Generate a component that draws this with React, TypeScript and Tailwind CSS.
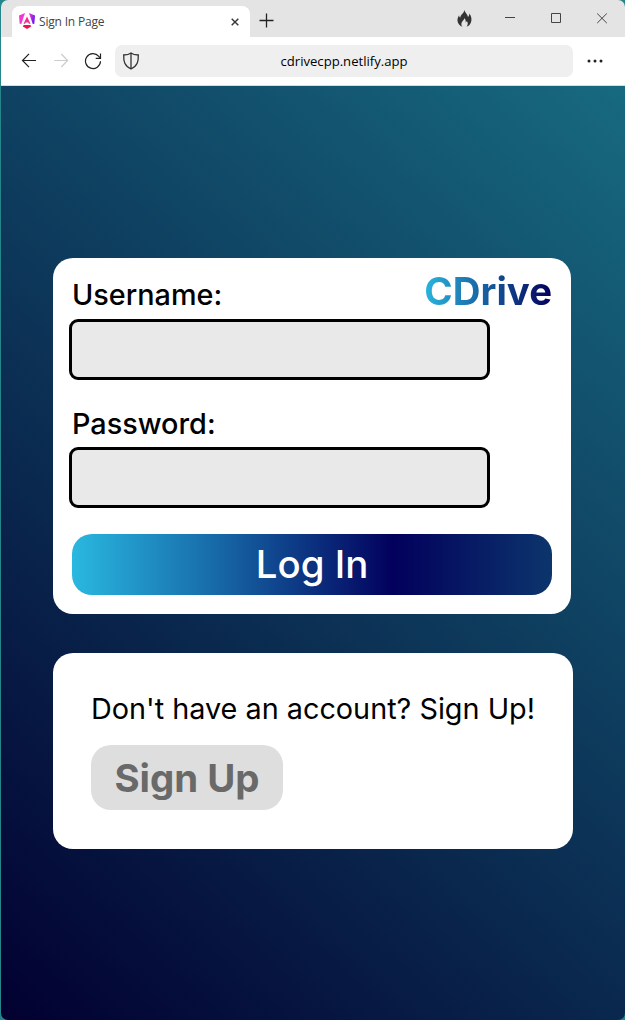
import React from "react";

function AngularLogo() {
  return (
    <svg width="16" height="17" viewBox="0 0 16 17" className="shrink-0">
      <defs>
        <linearGradient id="ng" x1="0" y1="0" x2="1" y2="0.4">
          <stop offset="0" stopColor="#f52fd0" />
          <stop offset="0.55" stopColor="#b02ae6" />
          <stop offset="1" stopColor="#6a14f0" />
        </linearGradient>
      </defs>
      <path d="M0 2.6 L6 0 L2.3 11 L.7 10.7 Z" fill="#f636d2" />
      <path d="M16 2.6 L10 0 L13.7 11 L15.3 10.7 Z" fill="url(#ng)" />
      <path d="M8 3.4 L11.5 10.8 H9.9 L9.3 9.5 H6.7 L6.1 10.8 H4.5 Z" fill="#f02f92" />
      <path d="M4.7 12 H11.3 L12.2 13.6 L8 16 L3.8 13.6 Z" fill="#f0124f" />
    </svg>
  );
}

function TabStrip() {
  return (
    <header className="flex h-[37px] shrink-0 bg-[#e4e4e4] pl-[11px]">
      <div className="mt-1.5 flex h-[31px] w-[238px] items-center rounded-t-[8px] bg-white pl-[7px] pr-[11px]">
        <AngularLogo />
        <span className="ml-1 grow font-['Open_Sans',sans-serif] text-[12px] tracking-[-0.18px] text-[#444]">Sign In Page</span>
        <svg width="8" height="8" viewBox="0 0 8 8" stroke="#333" strokeWidth="1.4"><path d="M.7.7 7.3 7.3M7.3.7.7 7.3" /></svg>
      </div>
      <svg className="ml-[9px] mt-[13px]" width="15" height="15" viewBox="0 0 15 15" stroke="#222" strokeWidth="1.3"><path d="M7.5.5v14M.5 7.5h14" /></svg>
      <div className="ml-auto mr-[17px] flex h-[36px] items-center">
        <svg className="mr-[33px]" width="15" height="17" viewBox="0 0 15 17">
          <path d="M7.4 0C8 3 10.7 4.2 11 7C12 6.2 12.3 5 12.2 3.5C14.5 6 15 9.2 14 12.2C13.2 14.6 11.7 16 9.6 16.7C11 14.8 11.2 12.6 9.8 11C9.4 12 9 12.3 8.7 12.4C8.9 10.6 8.4 9.2 7.4 8.3C7.2 10.2 4.7 11.3 4.4 13.4C4.2 14.8 4.8 16 5.7 16.7C2.8 15.9.7 13.6.5 10.7C.3 8.6 1.2 6.8 2.1 5.3C2.2 6.4 2.5 7.1 3.2 7.7C3.4 4.7 6.9 3.4 7.4 0Z" fill="#333" />
        </svg>
        <svg width="11" height="11" viewBox="0 0 11 11" stroke="#444" strokeWidth="1"><path d="M0 4.5h10" /></svg>
        <svg className="ml-[35px]" width="11" height="11" viewBox="0 0 11 11" fill="none" stroke="#444"><path d="M.5.5h9v9h-9z" /></svg>
        <svg className="ml-[35px]" width="11" height="11" viewBox="0 0 11 11" stroke="#444"><path d="M.2.5l9.6 9.6M9.8.5l-9.6 9.6" /></svg>
      </div>
    </header>
  );
}

function Toolbar() {
  return (
    <nav className="flex h-12 shrink-0 items-center bg-white pl-5 pr-[22px]">
      <svg width="16" height="16" viewBox="0 0 16 16" fill="none" stroke="#222" strokeWidth="1.2"><path d="M15 7.5H1.5M8 .8 1.5 7.5 8 14.2" /></svg>
      <svg className="ml-4" width="16" height="16" viewBox="0 0 16 16" fill="none" stroke="#ccc" strokeWidth="1.2"><path d="M1.3 7.5h13M8.3 1 14.6 7.5 8.3 14" /></svg>
      <svg className="ml-[15px]" width="18" height="18" viewBox="0 0 18 18" fill="none" stroke="#222" strokeWidth="1.2">
        <path d="M16.5 9.3A7.5 7.5 0 1 1 14.8 4.3L16.3 6" />
        <path d="M16.5 1.5v4.8h-4.8" />
      </svg>
      <div className="ml-[13px] flex h-8 w-[458px] items-center rounded-[7px] bg-[#efefef] pl-[7px]">
        <svg width="18" height="18" viewBox="0 0 18 18" fill="none" stroke="#333" strokeWidth="1.3">
          <path d="M9 1C7 2.6 4.3 3 1.7 3C1.5 9.5 2.5 14 9 17C15.5 14 16.5 9.5 16.3 3C13.7 3 11 2.6 9 1ZM9 1V17" />
        </svg>
        <span className="grow pr-[25px] pt-px text-center font-['Open_Sans',sans-serif] text-[13.1px] text-black">cdrivecpp.netlify.app</span>
      </div>
      <svg className="ml-auto" width="16" height="4" viewBox="0 0 16 4" fill="#222"><circle cx="2" cy="2" r="1.5" /><circle cx="8" cy="2" r="1.5" /><circle cx="14" cy="2" r="1.5" /></svg>
    </nav>
  );
}

export default function App() {
  return (
    <div className="h-[1020px] w-[625px] overflow-hidden bg-[#24858a] pl-px">
      <div className="flex h-full w-full flex-col overflow-hidden rounded-[7px] font-[Inter,sans-serif] text-black">
        <TabStrip />
        <Toolbar />
        <main className="grow border-t border-[#d5dde1] bg-[linear-gradient(42deg,#020030,#176a80)] pl-[52px] pt-[172px]">
          <form className="flex h-[356px] w-[518px] flex-col rounded-[20px] bg-white pl-[19px] pt-[13px]">
            <div className="flex h-[48px] w-[480px] justify-between">
              <label className="mt-[5px] text-[28.8px] font-medium leading-[38px]">Username:</label>
              <span className="h-[40px] bg-[linear-gradient(90deg,#29b6de,#03005c)] bg-clip-text text-[38.4px] font-bold leading-[40px] text-transparent">CDrive</span>
            </div>
            <input className="-ml-[3px] h-[61px] w-[421px] shrink-0 rounded-[9px] border-3 border-black bg-[#e9e9e9] px-3 text-2xl outline-none" />
            <label className="mt-[25px] h-[42px] text-[28.8px] font-medium leading-[38px]">Password:</label>
            <input type="password" className="-ml-[3px] h-[61px] w-[421px] shrink-0 rounded-[9px] border-3 border-black bg-[#e9e9e9] px-3 text-2xl outline-none" />
            <button type="button" className="mt-[26px] h-[61px] w-[480px] rounded-[20px] bg-[linear-gradient(90deg,#29b8e0_0%,#1769a8_30%,#02005c_67%,#0c356c_100%)] text-[38.4px] font-medium leading-[61px] text-white">Log In</button>
          </form>
          <section className="mt-[39px] h-[196px] w-[520px] rounded-[20px] bg-white pl-[38px] pt-[36px]">
            <p className="whitespace-nowrap text-[28.8px] leading-[40px]">Don't have an account? Sign Up!</p>
            <button type="button" className="mt-4 h-[65px] w-[192px] rounded-[20px] bg-[#dedede] pt-px text-[38.4px] font-bold leading-[64px] text-[#696969]">Sign Up</button>
          </section>
        </main>
      </div>
    </div>
  );
}
